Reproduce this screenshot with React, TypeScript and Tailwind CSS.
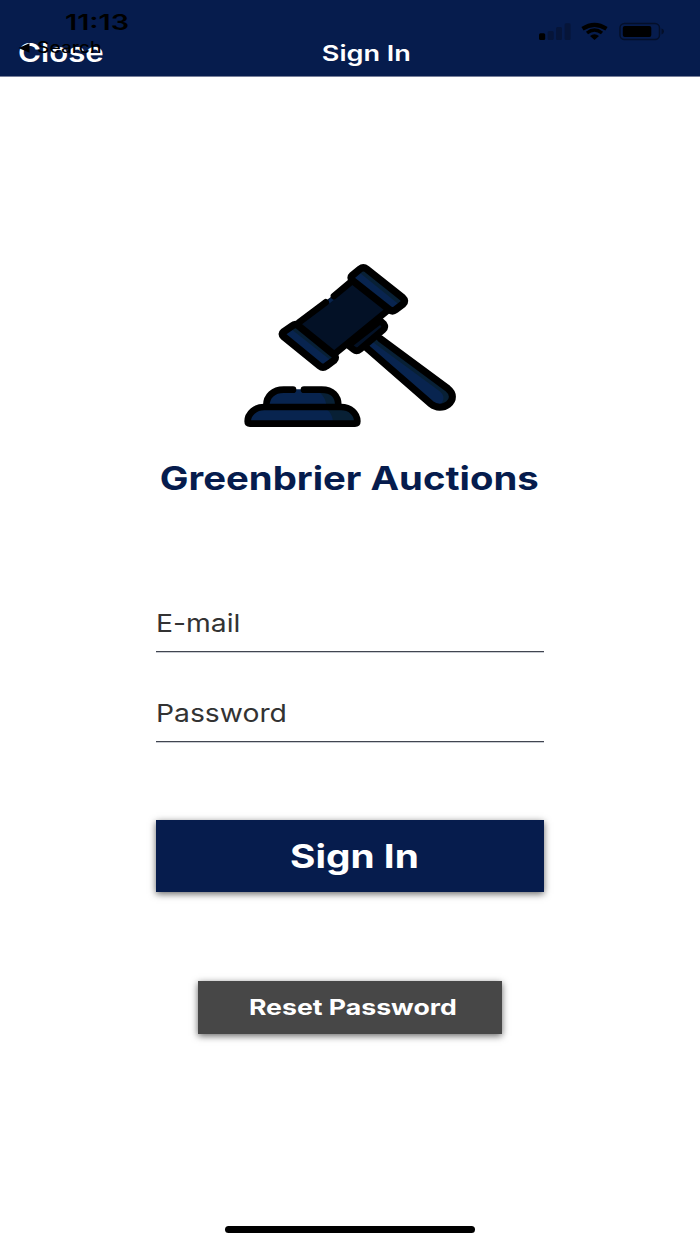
import { type ReactNode } from 'react';

const Wide = ({ className = '', children }: { className?: string; children: ReactNode }) => (
  <span className={`inline-block whitespace-nowrap ${className}`}>{children}</span>
);

function Gavel() {
  return (
    <svg viewBox="0 0 705 570" className="h-[190px] w-[235px]" fill="none" strokeLinecap="round" strokeLinejoin="round">
      {/* sound block */}
      <path d="M94 468C94 438 115 418 146 418H260C292 418 309 438 309 468Z" fill="#08244f" />
      <path d="M248 424C264 434 272 448 274 466H304C304 440 290 425 260 424Z" fill="#082035" />
      <path d="M38 516C38 490 60 471 88 471H318C346 471 367 492 367 516V521H38Z" fill="#08244f" />
      <path d="M271 475C286 486 293 498 294 516H362C358 492 344 476 318 475Z" fill="#082035" />
      <g stroke="#000" strokeWidth="20">
        <path d="M94 466C94 438 115 419 146 419H174M207 419H260C292 419 310 438 310 466" />
        <path d="M38 514C38 490 60 471 88 471H318C346 471 367 490 367 514Q367 521 360 521H45Q38 521 38 514Z" />
      </g>

      {/* handle */}
      <path d="M426 262L640 415C656 428 656 450 640 463C624 475 603 474 588 462L393 294Z" fill="#08244f" />
      <path d="M426 264L638 419C654 440 645 456 620 460C632 440 624 430 604 416L413 276Z" fill="#082035" />
      <path d="M436 266L639 416C657 430 656 451 640 463C624 475 603 474 588 462L393 292" stroke="#000" strokeWidth="21" />

      {/* collar */}
      <path d="M436 212L446 221Q453 231 445 239L375 298Q365 306 356 299L340 286Z" fill="#031126" stroke="#000" strokeWidth="20" />

      {/* head */}
      <path d="M350 92L460 178L302 308L190 217Z" fill="#031126" />
      <path d="M276 154L288 144L296 150L284 160Z" fill="#08244f" />
      <path d="M192 217L272 157M297 138L346 97M306 306L460 180" stroke="#000" strokeWidth="20" />
      <path d="M375 57Q385 49 395 57L503 143Q514 153 504 162L482 179Q472 187 462 178L352 91Q344 83 352 76Z" fill="#08244f" />
      <path d="M385 58L505 154L493 164L374 68Z" fill="#082035" />
      <path d="M375 57Q385 49 395 57L503 143Q514 153 504 162L482 179Q472 187 462 178L352 91Q344 83 352 76Z" stroke="#000" strokeWidth="22" />
      <path d="M171 228Q181 219 191 228L296 313Q306 322 297 331L274 348Q264 356 254 348L146 260Q137 252 146 245Z" fill="#08244f" />
      <path d="M182 229L302 323L290 333L169 238Z" fill="#082035" />
      <path d="M171 228Q181 219 191 228L296 313Q306 322 297 331L274 348Q264 356 254 348L146 260Q137 252 146 245Z" stroke="#000" strokeWidth="22" />
    </svg>
  );
}

function StatusIcons() {
  return (
    <svg viewBox="0 0 126 20" className="h-5 w-[126px]">
      <rect x="1" y="11.2" width="6.2" height="6.8" rx="1.5" fill="#000" />
      <rect x="9.7" y="9" width="6" height="9" rx="1.5" fill="#061539" />
      <rect x="18" y="5" width="6" height="13" rx="1.5" fill="#061539" />
      <rect x="26.6" y="1.3" width="6" height="16.7" rx="1.5" fill="#061539" />
      <g fill="none" stroke="#000">
        <path d="M44.5 6.8Q56.5-1 68.5 6.8" strokeWidth="4" />
        <path d="M49 11Q56.5 5.2 64 11" strokeWidth="3.4" />
      </g>
      <path d="M52 13.9Q56.5 10.4 61 13.9L56.5 18Z" fill="#000" />
      <rect x="82" y="1.5" width="39.5" height="16" rx="4.5" fill="none" stroke="#040f29" strokeWidth="1.5" />
      <rect x="84.8" y="4" width="28.5" height="11" rx="2" fill="#000" />
      <path d="M123.5 6.6Q126 7.3 126 9.5T123.5 12.4Z" fill="#040f29" />
    </svg>
  );
}

function Field({ label }: { label: string }) {
  return (
    <label className="flex h-[90px] w-[388px] flex-col justify-end border-b border-[#414550] pb-[13px] text-[24.6px] leading-[30px] text-[#333] shadow-[0_1px_0_#c9ccd2]">
      <Wide className="origin-left scale-x-[1.15]">{label}</Wide>
    </label>
  );
}

export default function App() {
  return (
    <div className="relative flex h-[1244px] w-[700px] flex-col items-center overflow-hidden bg-white font-['Inter',sans-serif]">
      <header className="relative grid h-[77px] w-full shrink-0 grid-cols-3 items-end border-b border-[#777f9a] bg-[#061c4d] pb-[7px] text-white">
        <button className="pl-[18px] text-left text-[26px] leading-[32px] font-semibold">
          <Wide className="origin-left scale-x-[1.2]">Close</Wide>
        </button>
        <h1 className="pl-[33px] text-center text-[21.5px] leading-[31px] font-semibold">
          <Wide className="scale-x-[1.26]">Sign In</Wide>
        </h1>
        {/* system status bar sits over the navigation bar */}
        <div className="absolute top-[9px] left-[65px] text-[21.5px] leading-[26px] font-semibold text-black">
          <Wide className="origin-left scale-x-[1.34]">11:13</Wide>
        </div>
        <div className="absolute top-[38px] left-[18px] flex items-center text-[15.5px] leading-[20px] font-medium text-black">
          <svg viewBox="0 0 12 10" className="mr-[7px] h-[10px] w-[12px]">
            <path d="M0.5 5L11.5 0.3V9.7Z" fill="#000" />
          </svg>
          <Wide className="origin-left scale-x-[1.24]">Search</Wide>
        </div>
        <div className="absolute top-[22px] left-[538px]">
          <StatusIcons />
        </div>
      </header>

      <main className="flex flex-col items-center pt-[173px]">
        <div className="mr-[-5px]">
          <Gavel />
        </div>
        <h2 className="mt-[19px] mr-[2px] text-[32.2px] leading-[40px] font-bold text-[#061c4d]">
          <Wide className="scale-x-[1.19]">Greenbrier Auctions</Wide>
        </h2>

        <div className="mt-[63px] flex flex-col">
          <Field label="E-mail" />
          <Field label="Password" />
        </div>

        <button className="mt-[78px] h-[72px] w-[388px] bg-[#061c4d] pt-px pl-[8px] text-[32.2px] leading-[40px] font-bold text-white shadow-[0_2px_7px_rgba(0,0,0,0.6)]">
          <Wide className="scale-x-[1.205]">Sign In</Wide>
        </button>
        <button className="mt-[89px] h-[53px] w-[304px] bg-[#474747] pb-[2px] pl-[6px] text-[21.5px] leading-[28px] font-bold text-white shadow-[0_2px_7px_rgba(0,0,0,0.6)]">
          <Wide className="scale-x-[1.24]">Reset Password</Wide>
        </button>
      </main>

      <div className="mt-auto mb-[11px] h-[7px] w-[250px] rounded-full bg-black" />
    </div>
  );
}
